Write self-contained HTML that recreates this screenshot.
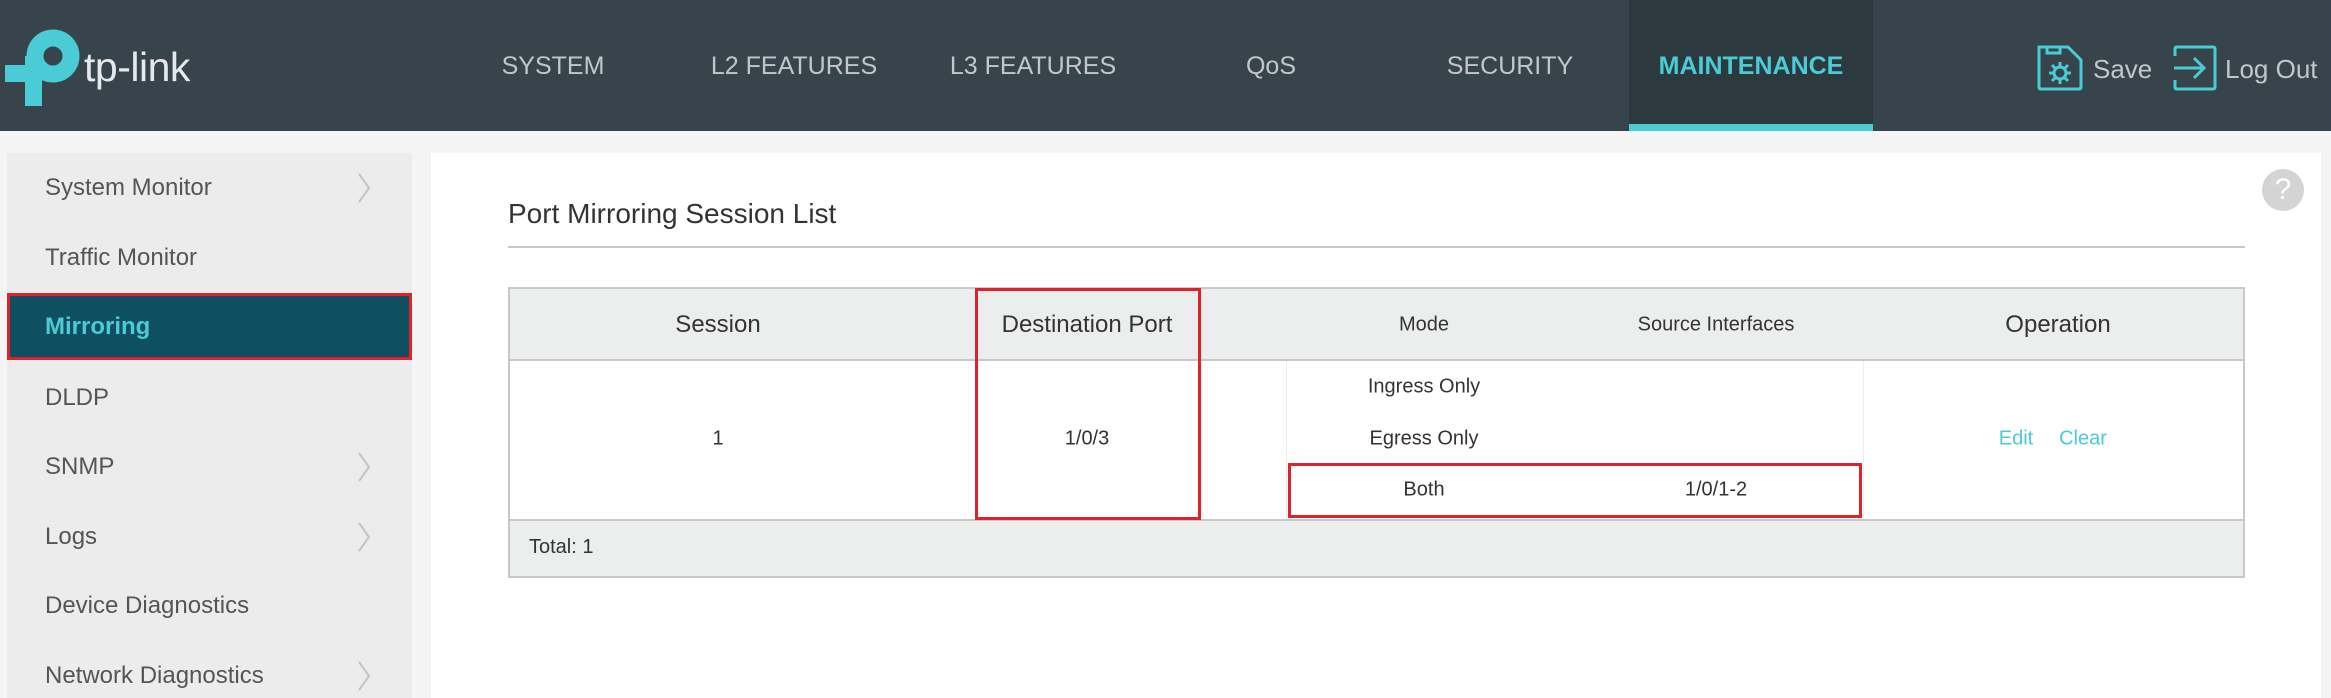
<!DOCTYPE html>
<html><head><meta charset="utf-8"><style>
*{margin:0;padding:0;box-sizing:border-box}
body{width:2331px;height:698px;overflow:hidden;background:#f4f4f4;font-family:"Liberation Sans",Arial,sans-serif;position:relative}
.a{position:absolute;white-space:nowrap}
.hdr{left:0;top:0;width:2331px;height:131px;background:#37444b}
.nav{top:52px;font-size:25px;color:#c2c6c9;transform:translateX(-50%)}
.side{left:7px;top:153px;width:405px;height:545px;background:#ececec}
.si{left:45px;font-size:24px;color:#555;transform:translateY(-50%)}
.chev{left:357px;transform:translateY(-50%)}
.main{left:431px;top:153px;width:1890px;height:545px;background:#fff}
.c{transform:translate(-50%,-50%);color:#333}
.hline{background:#c8c8c8;height:2px}
</style></head><body>
<div class="a hdr"></div>
<svg class="a" style="left:0;top:15px" width="90" height="100" viewBox="0 15 90 100">
<circle cx="53" cy="56" r="18" stroke="#4acbd6" stroke-width="17" fill="none"/>
<rect x="25" y="56" width="17" height="50" fill="#4acbd6"/>
<rect x="5" y="65" width="37" height="17" fill="#4acbd6"/>
</svg>
<div class="a" style="left:84px;top:47px;font-size:41px;line-height:1;color:#e6e9eb;letter-spacing:-0.5px">tp-link</div>
<div class="a nav" style="left:553px">SYSTEM</div>
<div class="a nav" style="left:794px">L2 FEATURES</div>
<div class="a nav" style="left:1033px">L3 FEATURES</div>
<div class="a nav" style="left:1271px">QoS</div>
<div class="a nav" style="left:1510px">SECURITY</div>
<div class="a" style="left:1629px;top:0;width:244px;height:131px;background:#2c393f"></div>
<div class="a" style="left:1629px;top:124px;width:244px;height:7px;background:#4acbd6"></div>
<div class="a nav" style="left:1751px;color:#4acbd6;font-weight:bold">MAINTENANCE</div>
<svg class="a" style="left:2036px;top:44px" width="48" height="48" viewBox="0 0 48 48" fill="none" stroke="#4acbd6" stroke-width="3">
<path d="M3 3 H32 L45 16 V43 Q45 45 43 45 H5 Q3 45 3 43 Z"/><path d="M11 3 V9 H24 V3"/>
<circle cx="24" cy="29" r="6"/><path d="M24 18v4M24 36v4M13 29h4M31 29h4M16 21l3 3M29 34l3 3M16 37l3-3M29 24l3-3"/>
</svg>
<div class="a" style="left:2093px;top:54px;font-size:26px;color:#c2c6c9">Save</div>
<svg class="a" style="left:2172px;top:44px" width="46" height="48" viewBox="0 0 46 48" fill="none" stroke="#4acbd6" stroke-width="3">
<path d="M3 12 V5 Q3 3 5 3 H41 Q43 3 43 5 V43 Q43 45 41 45 H5 Q3 45 3 43 V36"/><path d="M2 24 H32 M22 14 L32 24 L22 34"/>
</svg>
<div class="a" style="left:2225px;top:54px;font-size:26px;color:#c2c6c9">Log Out</div>

<div class="a side"></div>
<svg width="0" height="0" style="position:absolute"><defs><symbol id="cv" viewBox="0 0 14 30"><path d="M2 1 L12 15 L2 29" fill="none" stroke="#c4c4c4" stroke-width="2"/></symbol></defs></svg>
<div class="a si" style="top:188px">System Monitor</div><svg class="a chev" style="top:188px" width="14" height="30"><use href="#cv"/></svg>
<div class="a si" style="top:258px">Traffic Monitor</div>
<div class="a" style="left:7px;top:293px;width:405px;height:67px;background:#0f5060;border:3px solid #e0202a"></div>
<div class="a si" style="top:327px;color:#4acbd6;font-weight:bold">Mirroring</div>
<div class="a si" style="top:398px">DLDP</div>
<div class="a si" style="top:467px">SNMP</div><svg class="a chev" style="top:467px" width="14" height="30"><use href="#cv"/></svg>
<div class="a si" style="top:537px">Logs</div><svg class="a chev" style="top:537px" width="14" height="30"><use href="#cv"/></svg>
<div class="a si" style="top:606px">Device Diagnostics</div>
<div class="a si" style="top:676px">Network Diagnostics</div><svg class="a chev" style="top:676px" width="14" height="30"><use href="#cv"/></svg>

<div class="a main"></div>
<div class="a" style="left:2262px;top:169px;width:42px;height:42px;border-radius:50%;background:#d4d4d4;color:#fff;font-size:30px;text-align:center;line-height:42px">?</div>
<div class="a" style="left:508px;top:198px;font-size:28px;color:#333">Port Mirroring Session List</div>
<div class="a hline" style="left:508px;top:246px;width:1737px"></div>

<div class="a" style="left:508px;top:288px;width:1737px;height:72px;background:#eceeed"></div>
<div class="a" style="left:508px;top:520px;width:1737px;height:57px;background:#eceeed"></div>
<div class="a hline" style="left:508px;top:287px;width:1737px"></div>
<div class="a hline" style="left:508px;top:359px;width:1737px"></div>
<div class="a hline" style="left:508px;top:519px;width:1737px"></div>
<div class="a hline" style="left:508px;top:576px;width:1737px"></div>
<div class="a" style="left:508px;top:287px;width:2px;height:291px;background:#c8c8c8"></div>
<div class="a" style="left:2243px;top:287px;width:2px;height:291px;background:#c8c8c8"></div>
<div class="a" style="left:1286px;top:361px;width:1px;height:158px;background:#eee"></div>
<div class="a" style="left:1863px;top:361px;width:1px;height:158px;background:#eee"></div>

<div class="a c" style="left:718px;top:325px;font-size:24px">Session</div>
<div class="a c" style="left:1087px;top:325px;font-size:24px">Destination Port</div>
<div class="a c" style="left:1424px;top:325px;font-size:20px">Mode</div>
<div class="a c" style="left:1716px;top:325px;font-size:20px">Source Interfaces</div>
<div class="a c" style="left:2058px;top:325px;font-size:24px">Operation</div>
<div class="a c" style="left:718px;top:439px;font-size:20px">1</div>
<div class="a c" style="left:1087px;top:439px;font-size:20px">1/0/3</div>
<div class="a c" style="left:1424px;top:387px;font-size:20px">Ingress Only</div>
<div class="a c" style="left:1424px;top:439px;font-size:20px">Egress Only</div>
<div class="a c" style="left:1424px;top:490px;font-size:20px">Both</div>
<div class="a c" style="left:1716px;top:490px;font-size:20px">1/0/1-2</div>
<div class="a c" style="left:2016px;top:439px;font-size:20px;color:#4acbd6">Edit</div>
<div class="a c" style="left:2083px;top:439px;font-size:20px;color:#4acbd6">Clear</div>
<div class="a" style="left:529px;top:536px;font-size:20px;color:#333">Total: 1</div>

<div class="a" style="left:975px;top:288px;width:226px;height:232px;border:3px solid #e0202a"></div>
<div class="a" style="left:1288px;top:463px;width:574px;height:55px;border:3px solid #e0202a"></div>
</body></html>
